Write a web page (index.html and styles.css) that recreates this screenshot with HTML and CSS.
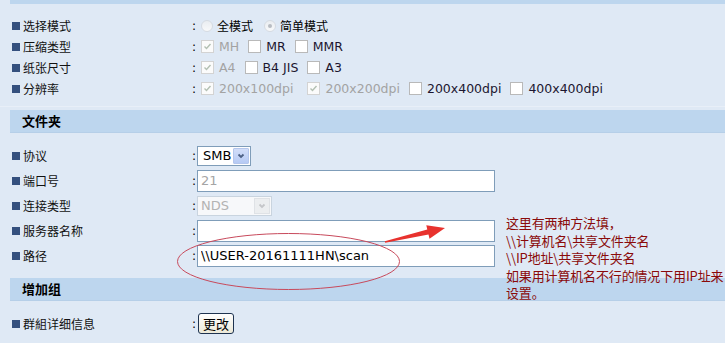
FILE: index.html
```html
<!DOCTYPE html>
<html lang="zh-CN">
<head>
  <meta charset="UTF-8" />
  <title>扫描设置 - 文件夹</title>
  <link rel="stylesheet" href="styles.css">
</head>
<body>

  <div class="topbar"></div>

  <div class="group first">
    <div class="row">
      <div class="label"><i class="bullet"></i>选择模式</div>
      <div class="colon">:</div>
      <div class="ctrl">
        <span class="opt"><span class="radio"></span>全模式</span>
        <span class="opt"><span class="radio on"></span>简单模式</span>
      </div>
    </div>
    <div class="row">
      <div class="label"><i class="bullet"></i>压缩类型</div>
      <div class="colon">:</div>
      <div class="ctrl">
        <span class="chk off"><span class="cb on"><svg viewBox="0 0 11 11"><path d="M2.5 5.5l2 2 4-4.5"/></svg></span>MH</span>
        <span class="chk"><span class="cb"></span>MR</span>
        <span class="chk"><span class="cb"></span>MMR</span>
      </div>
    </div>
    <div class="row">
      <div class="label"><i class="bullet"></i>纸张尺寸</div>
      <div class="colon">:</div>
      <div class="ctrl">
        <span class="chk off"><span class="cb on"><svg viewBox="0 0 11 11"><path d="M2.5 5.5l2 2 4-4.5"/></svg></span>A4</span>
        <span class="chk"><span class="cb"></span>B4 JIS</span>
        <span class="chk"><span class="cb"></span>A3</span>
      </div>
    </div>
    <div class="row">
      <div class="label"><i class="bullet"></i>分辨率</div>
      <div class="colon">:</div>
      <div class="ctrl">
        <span class="chk off wide"><span class="cb on"><svg viewBox="0 0 11 11"><path d="M2.5 5.5l2 2 4-4.5"/></svg></span>200x100dpi</span>
        <span class="chk off"><span class="cb on"><svg viewBox="0 0 11 11"><path d="M2.5 5.5l2 2 4-4.5"/></svg></span>200x200dpi</span>
        <span class="chk"><span class="cb"></span>200x400dpi</span>
        <span class="chk"><span class="cb"></span>400x400dpi</span>
      </div>
    </div>
  </div>

  <div class="sep"></div>
  <div class="head">文件夹</div>

  <div class="group">
    <div class="row tall">
      <div class="label"><i class="bullet"></i>协议</div>
      <div class="colon">:</div>
      <div class="ctrl">
        <div class="select smb"><span>SMB</span><span class="drop"><svg viewBox="0 0 10 10"><path d="M2.5 3.5l2.5 2.5 2.5-2.5"/></svg></span></div>
      </div>
    </div>
    <div class="row tall">
      <div class="label"><i class="bullet"></i>端口号</div>
      <div class="colon">:</div>
      <div class="ctrl"><input class="field dim" type="text" value="21" disabled></div>
    </div>
    <div class="row tall">
      <div class="label"><i class="bullet"></i>连接类型</div>
      <div class="colon">:</div>
      <div class="ctrl">
        <div class="select nds"><span>NDS</span><span class="drop"><svg viewBox="0 0 10 10"><path d="M2.5 3.5l2.5 2.5 2.5-2.5"/></svg></span></div>
      </div>
    </div>
    <div class="row tall">
      <div class="label"><i class="bullet"></i>服务器名称</div>
      <div class="colon">:</div>
      <div class="ctrl"><input class="field" type="text" value=""></div>
    </div>
    <div class="row tall">
      <div class="label"><i class="bullet"></i>路径</div>
      <div class="colon">:</div>
      <div class="ctrl"><input class="field path" type="text" value="\\USER-20161111HN\scan"></div>
    </div>
  </div>

  <div class="head">增加组</div>

  <div class="group last">
    <div class="row">
      <div class="label"><i class="bullet"></i>群組详细信息</div>
      <div class="colon">:</div>
      <div class="ctrl"><button class="btn">更改</button></div>
    </div>
  </div>

  <div class="note">
    这里有两种方法填，<br>
    \\计算机名\共享文件夹名<br>
    \\IP地址\共享文件夹名<br>
    如果用计算机名不行的情况下用IP址来<br>
    设置。
  </div>

  <svg class="marks" width="725" height="343" viewBox="0 0 725 343">
    <ellipse cx="288.5" cy="261.5" rx="111" ry="28" fill="none" stroke="#c84a5c" stroke-width="1"/>
    <polygon points="384.8,241.2 427.3,229.6 426.3,225.2 445,228 429.5,238.8 428.5,234.4 385.2,242.8" fill="#e8322e"/>
  </svg>

</body>
</html>
```

FILE: styles.css
```css
body {
  margin: 0;
  width: 725px;
  height: 343px;
  overflow: hidden;
  position: relative;
  background-color: #dfe9f5;
  font-family: 'DejaVu Sans', 'Noto Sans CJK SC', sans-serif;
  font-size: 12.5px;
  color: #000;
}
.topbar {
  height: 4px;
  margin-left: 10px;
  background-color: #bdd6ee;
}
.group {
  padding: 10px 0;
}
.group.first {
  padding: 11px 0 7px;
}
.group.last {
  padding: 12px 0 0;
}
.sep {
  height: 1px;
  background-color: #e8eff8;
  margin-bottom: 3px;
}
.head {
  height: 23px;
  box-sizing: border-box;
  margin-left: 10px;
  padding-left: 12px;
  background-color: #bdd6ee;
  border-bottom: 1px solid #b6cfe8;
  font-family: 'Noto Sans CJK SC', sans-serif;
  font-weight: bold;
  font-size: 13px;
  line-height: 22px;
}
.row {
  display: grid;
  grid-template-columns: 190px 7px auto;
  align-items: center;
  height: 21px;
}
.row.tall {
  height: 25px;
}
.label {
  display: flex;
  align-items: center;
  padding-left: 12px;
  font-family: 'Noto Sans CJK SC', sans-serif;
  font-size: 12px;
  color: #111;
}
.bullet {
  width: 8px;
  height: 8px;
  margin-right: 3px;
  background-color: #34507e;
}
.colon {
  padding-left: 2px;
  font-size: 12px;
}
.ctrl {
  display: flex;
  align-items: center;
}

/* radios and checkboxes */
.opt {
  display: inline-flex;
  align-items: center;
  margin-right: 7px;
  font-family: 'Noto Sans CJK SC', sans-serif;
  font-size: 12px;
}
.radio {
  width: 12px;
  height: 12px;
  margin: 0 4px 0 4px;
  box-sizing: border-box;
  border: 1px solid #d6dbe2;
  border-radius: 50%;
  background: linear-gradient(#e9edf1, #f8f9fa);
  display: flex;
  align-items: center;
  justify-content: center;
}
.radio.on::after {
  content: "";
  width: 4px;
  height: 4px;
  border-radius: 50%;
  background-color: #b8bcc2;
}
.chk {
  display: inline-flex;
  align-items: center;
  margin-right: 5px;
  color: #1c1630;
}
.chk.off {
  color: #a3a3a3;
}
.chk.wide {
  margin-right: 10px;
}
.cb {
  width: 13px;
  height: 13px;
  margin: 0 5px 0 4px;
  box-sizing: border-box;
  border: 1px solid #b9b9b9;
  background-color: #fff;
}
.cb.on {
  border-color: #d3d3d3;
  background-color: #fbfbfb;
}
.cb svg {
  display: block;
  width: 11px;
  height: 11px;
  fill: none;
  stroke: #b3c0b3;
  stroke-width: 1.4;
}

/* fields */
.field {
  width: 298px;
  height: 22px;
  box-sizing: border-box;
  margin: 0;
  padding: 0 0 0 3px;
  border: 1px solid #7f9db9;
  background-color: #fff;
  font-family: 'DejaVu Sans', sans-serif;
  font-size: 13px;
  color: #000;
  outline: none;
}
.field.dim {
  color: #a5a5a5;
}
.select {
  display: flex;
  align-items: center;
  justify-content: space-between;
  box-sizing: border-box;
  height: 20px;
  padding: 1px 1px 1px 5px;
  font-family: 'DejaVu Sans', sans-serif;
  font-size: 13px;
  background-color: #fff;
}
.select .drop {
  width: 16px;
  height: 16px;
  box-sizing: border-box;
  display: flex;
  align-items: center;
  justify-content: center;
}
.select .drop svg {
  width: 10px;
  height: 10px;
  fill: none;
  stroke-width: 1.8;
}
.smb {
  width: 54px;
  border: 1px solid #7f9db9;
}
.smb .drop {
  background: linear-gradient(#d2def9, #b6caf4);
  border: 1px solid #b4c6ec;
  border-radius: 1px;
}
.smb .drop svg {
  stroke: #4d6185;
}
.nds {
  width: 75px;
  padding-left: 3px;
  border: 1px solid #c9d4df;
  background-color: #f7f8fa;
  color: #b3b3b3;
}
.nds .drop {
  background-color: #eceef0;
  border: 1px solid #dfe2e6;
}
.nds .drop svg {
  stroke: #c4c6c9;
}
.btn {
  width: 36px;
  height: 21px;
  margin: 0 0 0 1px;
  padding: 0;
  box-sizing: border-box;
  border: 1px solid #1e3350;
  border-radius: 3px;
  background: linear-gradient(#ffffff, #ece9d8);
  font-family: 'Noto Sans CJK SC', sans-serif;
  font-size: 13px;
  line-height: 18px;
  color: #000;
}

/* annotation on the screenshot */
.note {
  position: absolute;
  left: 506px;
  top: 214px;
  font-family: 'Noto Sans CJK SC', sans-serif;
  font-size: 13px;
  line-height: 17.5px;
  letter-spacing: -0.15px;
  color: #8a0a0a;
  white-space: nowrap;
}
.marks {
  position: absolute;
  left: 0;
  top: 0;
  pointer-events: none;
}
```
